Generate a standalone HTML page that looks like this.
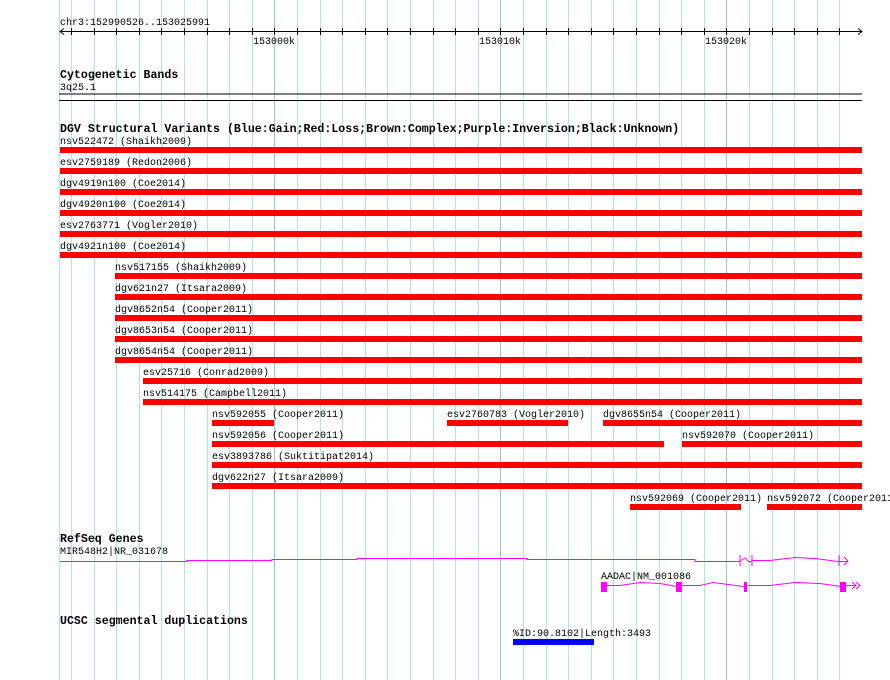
<!DOCTYPE html>
<html><head><meta charset="utf-8"><style>
html,body{margin:0;padding:0;background:#fff;}
svg{display:block;}
text{font-family:"Liberation Mono",monospace;font-size:10px;fill:#000;}
.h{font-weight:bold;font-size:11.6px;}
</style></head><body>
<svg width="890" height="680" viewBox="0 0 890 680" xmlns="http://www.w3.org/2000/svg">
<g fill="#a8e6ee">
<rect x="59" y="0" width="1" height="680"/>
<rect x="71" y="0" width="1" height="680"/><rect x="94" y="0" width="1" height="680"/><rect x="116" y="0" width="1" height="680"/><rect x="139" y="0" width="1" height="680"/><rect x="161" y="0" width="1" height="680"/><rect x="184" y="0" width="1" height="680"/><rect x="207" y="0" width="1" height="680"/><rect x="229" y="0" width="1" height="680"/><rect x="252" y="0" width="1" height="680"/>
<rect x="297" y="0" width="1" height="680"/><rect x="320" y="0" width="1" height="680"/><rect x="342" y="0" width="1" height="680"/><rect x="365" y="0" width="1" height="680"/><rect x="387" y="0" width="1" height="680"/><rect x="410" y="0" width="1" height="680"/><rect x="433" y="0" width="1" height="680"/><rect x="455" y="0" width="1" height="680"/><rect x="478" y="0" width="1" height="680"/>
<rect x="523" y="0" width="1" height="680"/><rect x="546" y="0" width="1" height="680"/><rect x="568" y="0" width="1" height="680"/><rect x="591" y="0" width="1" height="680"/><rect x="613" y="0" width="1" height="680"/><rect x="636" y="0" width="1" height="680"/><rect x="659" y="0" width="1" height="680"/><rect x="681" y="0" width="1" height="680"/><rect x="704" y="0" width="1" height="680"/>
<rect x="749" y="0" width="1" height="680"/><rect x="772" y="0" width="1" height="680"/><rect x="794" y="0" width="1" height="680"/><rect x="817" y="0" width="1" height="680"/><rect x="839" y="0" width="1" height="680"/>
</g>
<g fill="#88c8e6">
<rect x="274" y="0" width="1" height="680"/><rect x="500" y="0" width="1" height="680"/><rect x="726" y="0" width="1" height="680"/>
</g>
<text x="60" y="25">chr3:152990526..153025991</text>
<line x1="60" y1="31.5" x2="862" y2="31.5" stroke="#000"/>
<path d="M64 28.5 L60 31.5 L64 34.5 M858 28.5 L862 31.5 L858 34.5" stroke="#000" fill="none"/>
<g fill="#000">
<rect x="71" y="28" width="1" height="7"/><rect x="94" y="28" width="1" height="7"/><rect x="116" y="28" width="1" height="7"/><rect x="139" y="28" width="1" height="7"/><rect x="161" y="28" width="1" height="7"/><rect x="184" y="28" width="1" height="7"/><rect x="207" y="28" width="1" height="7"/><rect x="229" y="28" width="1" height="7"/><rect x="252" y="28" width="1" height="7"/><rect x="274" y="28" width="1" height="7"/>
<rect x="297" y="28" width="1" height="7"/><rect x="320" y="28" width="1" height="7"/><rect x="342" y="28" width="1" height="7"/><rect x="365" y="28" width="1" height="7"/><rect x="387" y="28" width="1" height="7"/><rect x="410" y="28" width="1" height="7"/><rect x="433" y="28" width="1" height="7"/><rect x="455" y="28" width="1" height="7"/><rect x="478" y="28" width="1" height="7"/><rect x="500" y="28" width="1" height="7"/>
<rect x="523" y="28" width="1" height="7"/><rect x="546" y="28" width="1" height="7"/><rect x="568" y="28" width="1" height="7"/><rect x="591" y="28" width="1" height="7"/><rect x="613" y="28" width="1" height="7"/><rect x="636" y="28" width="1" height="7"/><rect x="659" y="28" width="1" height="7"/><rect x="681" y="28" width="1" height="7"/><rect x="704" y="28" width="1" height="7"/><rect x="726" y="28" width="1" height="7"/>
<rect x="749" y="28" width="1" height="7"/><rect x="772" y="28" width="1" height="7"/><rect x="794" y="28" width="1" height="7"/><rect x="817" y="28" width="1" height="7"/><rect x="839" y="28" width="1" height="7"/>
</g>
<text x="253" y="44">153000k</text>
<text x="479" y="44">153010k</text>
<text x="705" y="44">153020k</text>

<text class="h" x="60" y="78">Cytogenetic Bands</text>
<text x="60" y="90">3q25.1</text>
<line x1="59" y1="94" x2="862" y2="94" stroke="#000"/>
<line x1="59" y1="100.5" x2="862" y2="100.5" stroke="#000"/>

<text class="h" x="60" y="132">DGV Structural Variants (Blue:Gain;Red:Loss;Brown:Complex;Purple:Inversion;Black:Unknown)</text>
<g fill="#f00">
<rect x="60" y="147" width="802" height="6"/>
<rect x="60" y="168" width="802" height="6"/>
<rect x="60" y="189" width="802" height="6"/>
<rect x="60" y="210" width="802" height="6"/>
<rect x="60" y="231" width="802" height="6"/>
<rect x="60" y="252" width="802" height="6"/>
<rect x="115" y="273" width="747" height="6"/>
<rect x="115" y="294" width="747" height="6"/>
<rect x="115" y="315" width="747" height="6"/>
<rect x="115" y="336" width="747" height="6"/>
<rect x="115" y="357" width="747" height="6"/>
<rect x="143" y="378" width="719" height="6"/>
<rect x="143" y="399" width="719" height="6"/>
<rect x="212" y="420" width="62" height="6"/>
<rect x="447" y="420" width="121" height="6"/>
<rect x="603" y="420" width="259" height="6"/>
<rect x="212" y="441" width="452" height="6"/>
<rect x="682" y="441" width="180" height="6"/>
<rect x="212" y="462" width="650" height="6"/>
<rect x="212" y="483" width="650" height="6"/>
<rect x="630" y="504" width="111" height="6"/>
<rect x="767" y="504" width="95" height="6"/>
</g>
<text x="60" y="144">nsv522472 (Shaikh2009)</text>
<text x="60" y="165">esv2759189 (Redon2006)</text>
<text x="60" y="186">dgv4919n100 (Coe2014)</text>
<text x="60" y="207">dgv4920n100 (Coe2014)</text>
<text x="60" y="228">esv2763771 (Vogler2010)</text>
<text x="60" y="249">dgv4921n100 (Coe2014)</text>
<text x="115" y="270">nsv517155 (Shaikh2009)</text>
<text x="115" y="291">dgv621n27 (Itsara2009)</text>
<text x="115" y="312">dgv8652n54 (Cooper2011)</text>
<text x="115" y="333">dgv8653n54 (Cooper2011)</text>
<text x="115" y="354">dgv8654n54 (Cooper2011)</text>
<text x="143" y="375">esv25716 (Conrad2009)</text>
<text x="143" y="396">nsv514175 (Campbell2011)</text>
<text x="212" y="417">nsv592055 (Cooper2011)</text>
<text x="447" y="417">esv2760783 (Vogler2010)</text>
<text x="603" y="417">dgv8655n54 (Cooper2011)</text>
<text x="212" y="438">nsv592056 (Cooper2011)</text>
<text x="682" y="438">nsv592070 (Cooper2011)</text>
<text x="212" y="459">esv3893786 (Suktitipat2014)</text>
<text x="212" y="480">dgv622n27 (Itsara2009)</text>
<text x="630" y="501">nsv592069 (Cooper2011)</text>
<text x="767" y="501">nsv592072 (Cooper2011)</text>

<text class="h" x="60" y="542">RefSeq Genes</text>
<text x="60" y="554">MIR548H2|NR_031678</text>
<g stroke="#f0f" fill="none">
<path d="M60 561.5 H187 V560.5 H272 V559.5 H357 V558.5 H527 V559.5 H695 V561.5 H740"/>
<path d="M740 555 V566 M752 555 V566 M740 561 L745 558 L749 562 L752 561"/>
<path d="M752 560.5 H770 L795 557.5 L815 558.5 L838 561.5 H848"/>
<path d="M839 555 V566 M844 557 L848 561 L844 565"/>
<path d="M607 585.5 H620 L640 582.5 L660 583.5 L677 586.5 M681 585.5 H700 L713 582.5 L744 586.5 M748 585.5 H770 L795 582.5 L820 583.5 L841 586.5 M846 585.5 H856 M852 582 L856 585.5 L852 589 M856 582 L860 585.5 L856 589"/>
</g>
<g fill="#f0f">
<rect x="601" y="582" width="6" height="10"/>
<rect x="676" y="582" width="6" height="10"/>
<rect x="744" y="582" width="3" height="10"/>
<rect x="840" y="582" width="6" height="10"/>
</g>
<text x="601" y="579">AADAC|NM_001086</text>

<text class="h" x="60" y="624">UCSC segmental duplications</text>
<text x="513" y="636">%ID:90.8102|Length:3493</text>
<rect x="513" y="639" width="81" height="6" fill="#00f"/>
</svg>
</body></html>
